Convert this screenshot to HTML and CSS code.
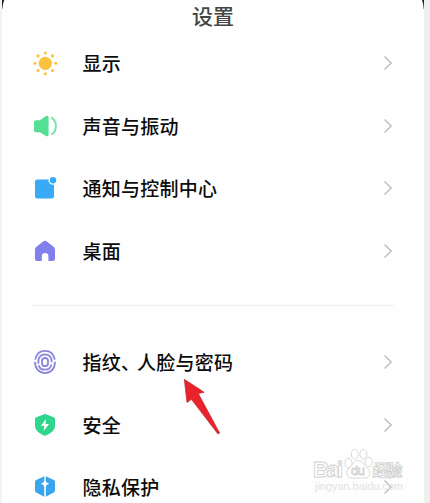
FILE: index.html
```html
<!DOCTYPE html>
<html lang="zh-CN">
<head>
    <meta charset="UTF-8">
    <meta name="viewport" content="width=device-width, initial-scale=1.0">
    <title>设置</title>
    <link rel="stylesheet" href="styles.css">
</head>
<body>
    <div class="screen">
        <svg class="corners" width="430" height="12" viewBox="0 0 430 12">
            <path d="M2 0H4.2Q2.7 4 2.3 9H2Z" fill="#222"/>
            <path d="M424 0H422Q423.6 4 423.7 9H424Z" fill="#222"/>
        </svg>
        <h1 class="title">设置</h1>

        <ul class="list">
            <li class="row">
                <svg class="icon" viewBox="0 0 26 26">
                    <g fill="#fcc23c">
                        <circle cx="13.3" cy="13.3" r="6.6"/>
                        <circle cx="13.3" cy="2.9" r="1.5"/>
                        <circle cx="20.5" cy="5.9" r="1.6"/>
                        <circle cx="23.8" cy="13.3" r="1.5"/>
                        <circle cx="20.5" cy="20.5" r="1.6"/>
                        <circle cx="13.3" cy="23.8" r="1.5"/>
                        <circle cx="6" cy="20.5" r="1.6"/>
                        <circle cx="2.9" cy="13.3" r="1.5"/>
                        <circle cx="6" cy="5.9" r="1.6"/>
                    </g>
                </svg>
                <span class="label">显示</span>
                <svg class="arrow" viewBox="0 0 10 16"><path d="M1.5 1.5L8.2 8L1.5 14.5"/></svg>
            </li>
            <li class="row">
                <svg class="icon" viewBox="0 0 26 26">
                    <path d="M4 7.3H8L14 3Q16.6 1.8 16.6 4.5V21.5Q16.6 24.2 14 23L8 19.2H4Q2 19.2 2 17.2V9.3Q2 7.3 4 7.3Z" fill="#54df94"/>
                    <path d="M19.3 4.3C25.4 8 25.4 18 19.3 21.7" fill="none" stroke="#7be3ac" stroke-width="2.1"/>
                </svg>
                <span class="label">声音与振动</span>
                <svg class="arrow" viewBox="0 0 10 16"><path d="M1.5 1.5L8.2 8L1.5 14.5"/></svg>
            </li>
            <li class="row">
                <svg class="icon" viewBox="0 0 26 26">
                    <rect x="3" y="4.5" width="19" height="19" rx="2.2" fill="#38aaf6"/>
                    <circle cx="21" cy="5.3" r="4.5" fill="#fefefe"/>
                    <circle cx="21" cy="5.3" r="3.2" fill="#38aaf6"/>
                </svg>
                <span class="label">通知与控制中心</span>
                <svg class="arrow" viewBox="0 0 10 16"><path d="M1.5 1.5L8.2 8L1.5 14.5"/></svg>
            </li>
            <li class="row">
                <svg class="icon" viewBox="0 0 26 26">
                    <path d="M11.2 3.6Q13 2 14.8 3.6L21.6 8.8Q23 10 23 11.6V21Q23 23 21 23H16.4V18.4Q16.4 15.1 13.1 15.1Q9.8 15.1 9.8 18.4V23H5Q3 23 3 21V11.6Q3 10 4.4 8.8Z" fill="#827fee"/>
                </svg>
                <span class="label">桌面</span>
                <svg class="arrow" viewBox="0 0 10 16"><path d="M1.5 1.5L8.2 8L1.5 14.5"/></svg>
            </li>
        </ul>

        <div class="divider"></div>

        <ul class="list">
            <li class="row">
                <svg class="icon" viewBox="0 0 26 26">
                    <g fill="none" stroke="#8c86dc" stroke-width="1.8">
                        <path d="M3.2 10.6C4.3 5 8 1.9 13 1.9S21.7 5 22.8 10.6M3 12.8C3 19.4 7 24.1 13 24.1S23 19.4 23 12.8"/>
                        <path d="M6.4 14.8V12C6.4 8 9 5.5 13 5.5S19.6 8 19.6 12V13.2M19.3 15.6C18.7 19 16.5 20.7 13 20.7C9.7 20.7 7.4 19 6.8 16.2"/>
                        <rect x="10" y="9" width="6" height="8.2" rx="3"/>
                    </g>
                </svg>
                <span class="label">指纹<span class="comma">、</span>人脸与密码</span>
                <svg class="arrow" viewBox="0 0 10 16"><path d="M1.5 1.5L8.2 8L1.5 14.5"/></svg>
            </li>
            <li class="row">
                <svg class="icon" viewBox="0 0 26 26">
                    <path d="M12 2.2Q13 1.7 14 2.2L21.6 5.2Q23 5.8 23 7.2V13.5C23 18.5 18.5 21.5 13.8 23.6Q13 24 12.2 23.6C7.5 21.5 3 18.5 3 13.5V7.2Q3 5.8 4.4 5.2Z" fill="#2fd48d"/>
                    <path d="M14.1 7L8.9 13.8H12.4L11.5 19L17.1 11.9H13.5Z" fill="#fff"/>
                </svg>
                <span class="label">安全</span>
                <svg class="arrow" viewBox="0 0 10 16"><path d="M1.5 1.5L8.2 8L1.5 14.5"/></svg>
            </li>
            <li class="row">
                <svg class="icon" viewBox="0 0 26 26">
                    <path d="M11.8 2.5Q13 1.9 14.2 2.5L21.7 6Q23 6.7 23 8V16.2Q23 17.6 21.8 18.4L14.2 22.6Q13 23.2 11.8 22.6L4.2 18.4Q3 17.6 3 16.2V8Q3 6.7 4.3 6Z" fill="#39a5ec"/>
                    <path d="M12.3 1.5H13.7V6.8L14.5 8.3L17.2 9.7L14.5 11.1L13.8 13V24H12.2V13L11.5 11.1L8.8 9.7L11.5 8.3L12.3 6.8Z" fill="#fff"/>
                </svg>
                <span class="label">隐私保护</span>
                <svg class="arrow" viewBox="0 0 10 16"><path d="M1.5 1.5L8.2 8L1.5 14.5"/></svg>
            </li>
        </ul>

        <svg class="pointer" viewBox="0 0 40 60">
            <path d="M1.3 1.3L21.2 14.3L15.3 15.5L36.6 55L35 56L8.4 21.3L4 24.6Z" fill="#e9222b" stroke="#bd252c" stroke-width=".7"/>
        </svg>

        <svg class="watermark" viewBox="0 0 96 46">
            <g fill="#fff" stroke="#cfcfcf" stroke-width=".8">
                <text class="brand" x="3" y="29" textLength="30">Bai</text>
                <ellipse cx="38.5" cy="15" rx="3.5" ry="4.5"/>
                <ellipse cx="44.8" cy="6.2" rx="3.5" ry="4.8"/>
                <ellipse cx="53.4" cy="6.2" rx="3.5" ry="4.8"/>
                <ellipse cx="58.8" cy="14" rx="3.5" ry="4.7"/>
                <path d="M48.3 12.5C52.3 12.5 53.8 17 57.3 20C61.8 24 59.8 30 54.8 30H42.3C36.8 30 34.8 24 39.3 20C42.8 17 44.3 12.5 48.3 12.5Z"/>
                <text class="du" x="41" y="27" textLength="14">du</text>
                <text class="jy" x="62.5" y="28" textLength="30">经验</text>
            </g>
            <text class="url" x="5" y="42" textLength="88">jingyan.baidu.com</text>
        </svg>
    </div>
</body>
</html>
```

FILE: styles.css
```css
body {
    margin: 0;
    background-color: #efefef;
    font-family: "Noto Sans CJK SC", sans-serif;
    color: #0c0c0c;
}
.screen {
    position: relative;
    box-sizing: border-box;
    width: 430px;
    height: 503px;
    overflow: hidden;
    background-color: #fefefe;
    border-left: 2px solid #f3f3f3;
    border-right: 6px solid #efefef;
}
.corners {
    position: absolute;
    top: 0;
    left: -2px;
}
.title {
    margin: 0;
    height: 32px;
    line-height: 30px;
    font-size: 21px;
    font-weight: 500;
    text-align: center;
    color: #444;
}
.list {
    margin: 0;
    padding: 0 30px;
    list-style: none;
}
.row {
    display: flex;
    align-items: center;
    height: 62.5px;
}
.icon {
    width: 26px;
    height: 26px;
    flex: none;
}
.label {
    flex: 1;
    margin-left: 24.5px;
    font-size: 19px;
    font-weight: 500;
    letter-spacing: 0.25px;
    line-height: 28px;
}
.comma {
    letter-spacing: -3px;
}
.arrow {
    width: 10px;
    height: 16px;
    margin-right: 1px;
    flex: none;
    fill: none;
    stroke: #bdbdbd;
    stroke-width: 1.4;
}
.divider {
    height: 1px;
    margin: 23px 30px 25px;
    background-color: #f0f0f0;
}
/* red hint arrow over the list */
.pointer {
    position: absolute;
    left: 181px;
    top: 378px;
    width: 40px;
    height: 60px;
}
.watermark {
    position: absolute;
    left: 308px;
    top: 448px;
    width: 96px;
    height: 46px;
}
.brand {
    font: bold 22px "Liberation Sans", sans-serif;
}
.du {
    font: 13px "Liberation Sans", sans-serif;
}
.jy {
    font: bold 16px "Noto Sans CJK SC", sans-serif;
}
.url {
    font: 11px/1 "Liberation Sans", sans-serif;
    fill: #e2e2e2;
}
```
